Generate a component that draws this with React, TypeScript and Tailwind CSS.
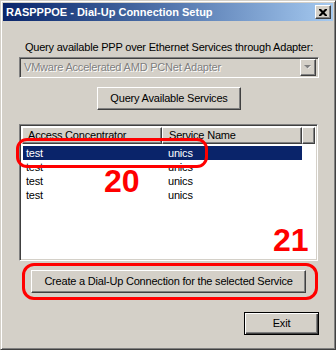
const raised =
  "border border-t-white border-l-white border-r-[#404040] border-b-[#404040] shadow-[inset_-1px_-1px_#808080]";
const sunken =
  "border border-t-[#808080] border-l-[#808080] border-r-white border-b-white shadow-[inset_1px_1px_#404040,inset_-1px_-1px_#d4d0c8]";

const rows = ["test", "test", "test", "test"];

export default function App() {
  return (
    <div className="relative w-[336px] h-[350px] bg-[#d4d0c8] p-[2px] border border-t-[#d4d0c8] border-l-[#d4d0c8] border-r-[#404040] border-b-[#404040] shadow-[inset_1px_1px_#fff,inset_-1px_-1px_#808080] font-['Liberation_Sans',Arial,sans-serif] text-[11px] tracking-[-0.2px] text-black">
      {/* Title bar */}
      <div className="h-[18px] flex items-center justify-between pl-[3px] pr-[2px] bg-gradient-to-r from-[#0a246a] to-[#a6caf0]">
        <span className="text-white font-bold text-[11px] tracking-normal leading-none">RASPPPOE - Dial-Up Connection Setup</span>
        <div className={`w-[16px] h-[14px] bg-[#d4d0c8] flex items-center justify-center ${raised}`}>
          <svg width="8" height="7" viewBox="0 0 8 7" className="mr-[1px]">
            <path d="M0 0h2l2 2 2-2h2v1l-2.5 2.5L8 6v1H6L4 5 2 7H0V6l2.5-2.5L0 1z" fill="#000" />
          </svg>
        </div>
      </div>

      {/* Body */}
      <div className="flex flex-col pl-[16px]">
        <div className="mt-[20px] w-[300px] h-[13px] leading-[13px] text-center whitespace-nowrap">
          Query available PPP over Ethernet Services through Adapter:
        </div>

        {/* Disabled combo */}
        <div className={`mt-[3px] w-[300px] h-[21px] bg-[#d4d0c8] flex items-center justify-between p-[2px] ${sunken}`}>
          <span className="pl-[2px] text-[#808080] [text-shadow:1px_1px_0_#fff] leading-none">
            VMware Accelerated AMD PCNet Adapter
          </span>
          <div className={`w-[16px] h-[17px] bg-[#d4d0c8] flex items-center justify-center ${raised}`}>
            <svg width="8" height="5" viewBox="0 0 8 5">
              <path d="M1 1h6L4 4z" fill="#fff" />
              <path d="M0 0h7L3.5 3.5z" fill="#808080" />
            </svg>
          </div>
        </div>

        <button className={`mt-[9px] ml-[78px] w-[144px] h-[23px] bg-[#d4d0c8] text-[11px] ${raised}`}>
          Query Available Services
        </button>

        {/* List view */}
        <div className={`mt-[14px] w-[299px] h-[137px] bg-white p-[2px] flex flex-col ${sunken}`}>
          <div className="flex h-[17px] bg-[#d4d0c8]">
            <div className={`w-[140px] h-full pl-[5px] flex items-center ${raised}`}>Access Concentrator</div>
            <div className={`w-[140px] h-full pl-[6px] flex items-center ${raised}`}>Service Name</div>
            <div className={`flex-1 h-full ${raised}`} />
          </div>
          <div className="pt-[2px] flex flex-col">
            {rows.map((r, i) => (
              <div
                key={i}
                className={`flex h-[14px] items-center ml-[1px] w-[279px] ${i === 0 ? "bg-[#0a246a] text-white" : ""}`}
              >
                <span className="w-[139px] pl-[3px]">{r}</span>
                <span className="pl-[6px]">unics</span>
              </div>
            ))}
          </div>
        </div>

        <button className={`mt-[9px] ml-[12px] w-[275px] h-[23px] bg-[#d4d0c8] text-[11px] ${raised}`}>
          Create a Dial-Up Connection for the selected Service
        </button>

        <button className="mt-[19px] ml-[225px] w-[75px] h-[23px] bg-[#d4d0c8] text-[11px] border border-black shadow-[inset_1px_1px_#fff,inset_-1px_-1px_#404040,inset_-2px_-2px_#808080]">
          Exit
        </button>
      </div>

      {/* Red annotations */}
      <div className="absolute left-[15px] top-[137px] w-[192px] h-[30px] border-[3px] border-[#ff0000] rounded-[11px]" />
      <div className="absolute left-[103px] top-[164px] text-[32px] tracking-normal leading-none font-bold text-[#ff0000]">20</div>
      <div className="absolute left-[272px] top-[223px] text-[32px] tracking-normal leading-none font-bold text-[#ff0000]">21</div>
      <div className="absolute left-[21px] top-[262px] w-[296px] h-[37px] border-[3px] border-[#ff0000] rounded-[12px]" />
    </div>
  );
}
